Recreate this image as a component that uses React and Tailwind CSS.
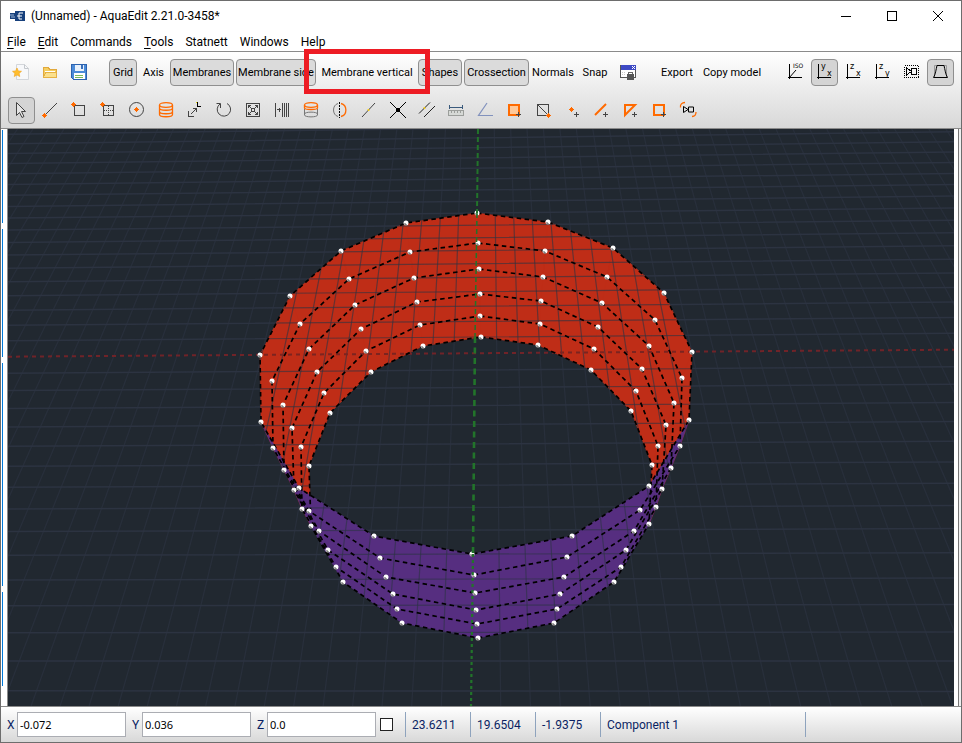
import React, { useState } from "react";

const ORANGE = "#ff6a00";
const DARK = "#444444";

const menus = [
  { label: "File", mnemonic: true },
  { label: "Edit", mnemonic: true },
  { label: "Commands" },
  { label: "Tools", mnemonic: true },
  { label: "Statnett" },
  { label: "Windows" },
  { label: "Help" },
];

// each station runs from the upper rim to the lower rim of the net
const stations = [
  [[477, 213], [478, 243], [479, 269], [480, 294], [480, 316], [481, 337]],
  [[548, 222], [545, 251], [543, 277], [541, 301], [540, 324], [538, 345]],
  [[613, 248], [607, 277], [602, 303], [598, 327], [594, 349], [591, 370]],
  [[664, 293], [655, 320], [649, 346], [642, 369], [636, 391], [631, 411]],
  [[692, 352], [682, 378], [674, 403], [666, 425], [658, 446], [652, 465]],
  [[689, 420], [680, 446], [671, 468], [662, 489], [656, 507], [649, 524]],
  [[649, 486], [640, 510], [634, 531], [626, 550], [621, 567], [614, 582]],
  [[572, 536], [567, 557], [564, 577], [560, 594], [557, 609], [554, 623]],
  [[472, 554], [474, 575], [475, 593], [476, 610], [477, 624], [478, 638]],
  [[374, 536], [380, 558], [386, 577], [393, 594], [397, 609], [402, 623]],
  [[299, 488], [309, 511], [319, 531], [328, 550], [336, 567], [343, 582]],
  [[261, 422], [273, 448], [284, 470], [294, 490], [302, 509], [311, 526]],
  [[260, 355], [272, 381], [283, 405], [292, 428], [301, 447], [309, 466]],
  [[290, 296], [300, 324], [309, 349], [317, 372], [324, 393], [330, 413]],
  [[341, 251], [349, 279], [355, 305], [361, 329], [366, 351], [371, 372]],
  [[406, 223], [410, 252], [414, 278], [417, 302], [420, 325], [423, 346]],
];

const panelPath = (i) => {
  const a = stations[i];
  const b = stations[(i + 1) % stations.length];
  return "M" + [...a, ...[...b].reverse()].map((p) => p.join(" ")).join("L") + "Z";
};

const backPanels = [11, 12, 13, 14, 15, 0, 1, 2, 3, 4].map(panelPath).join("");
const frontPanels = [5, 6, 7, 8, 9, 10].map(panelPath).join("");

const rings = [0, 1, 2, 3, 4, 5].map((r) =>
  stations.map((s) => s[r].join(",")).join(" ")
);

const DEPTH = 0.0178;
let rowPath = "";
for (let k = -19; k <= 15; k++) {
  if (k === 0) continue;
  const f = 1 / (1 - DEPTH * k) - 1;
  rowPath += `M8 ${(356.7 + 917 * f).toFixed(1)}L954 ${(349.7 + 938 * f).toFixed(1)}`;
}

let columnPath = "";
for (let j = -34; j <= 34; j++) {
  if (j === 0) continue;
  const top = 478 + 16.3 * j + 0.0145 * j * j;
  const bottom = 471 + 29.7 * j + 0.025 * j * j;
  columnPath += `M${top.toFixed(1)} 129L${bottom.toFixed(1)} 706`;
}

function Viewport() {
  return (
    <svg
      viewBox="8 129 946 577"
      preserveAspectRatio="xMidYMid slice"
      className="block min-h-0 min-w-0 flex-1 bg-[#212830]"
      role="img"
      aria-label="Net model"
    >
      <defs>
        <clipPath id="net">
          <path d={backPanels} />
          <path d={frontPanels} />
        </clipPath>
      </defs>
      <path d={columnPath} stroke="#282f3b" strokeWidth="1.3" fill="none" />
      <path d={rowPath} stroke="#2c3341" strokeWidth="1.5" fill="none" />
      <path d="M8 356.7L954 349.7" stroke="#702328" strokeWidth="2" strokeDasharray="4 4" />
      <path d={backPanels} fill="#bf2d17" stroke="#bf2d17" strokeWidth="0.5" />
      <path d={frontPanels} fill="#562e80" stroke="#562e80" strokeWidth="0.5" />
      <g clipPath="url(#net)" fill="none">
        <path d={columnPath} stroke="#2b3442" strokeOpacity="0.6" strokeWidth="1.2" />
        <path d={rowPath} stroke="#2b3442" strokeOpacity="0.6" strokeWidth="1.2" />
        <path d="M8 356.7L954 349.7" stroke="#7c2420" strokeWidth="2" strokeDasharray="4 4" />
      </g>
      {rings.map((points, i) => (
        <polygon
          key={i}
          points={points}
          fill="none"
          stroke="#000"
          strokeWidth="1.7"
          strokeDasharray="4.5 3.5"
        />
      ))}
      {stations.flat().map(([x, y]) => (
        <g key={`${x}-${y}`}>
          <circle cx={x} cy={y} r="2.5" fill="#fff" />
          <path d={`M${x - 2} ${y + 1}h2v2`} stroke="#555" strokeWidth="1" fill="none" />
        </g>
      ))}
      <g fill="none" stroke="#22742a">
        <path d="M478 129L477 213" strokeWidth="2" strokeDasharray="5 3" />
        <path d="M477 213L475 337" strokeWidth="1.5" strokeDasharray="5 3" />
        <path d="M475 337L473 554" strokeWidth="2.6" strokeDasharray="6 4.5" />
        <path d="M473 554L471 706" strokeWidth="2.2" strokeDasharray="3 3" />
      </g>
    </svg>
  );
}

function Icon({ children, crisp = true }) {
  return (
    <svg
      viewBox="0 0 25 25"
      className="h-[25px] w-[25px]"
      fill="none"
      stroke={DARK}
      shapeRendering={crisp ? "crispEdges" : "auto"}
      aria-hidden="true"
    >
      {children}
    </svg>
  );
}

function Plus({ x, y, color = DARK }) {
  return (
    <path
      d={`M${x - 2} ${y + 0.5}h5M${x + 0.5} ${y - 2}v5`}
      stroke={color}
      shapeRendering="crispEdges"
    />
  );
}

// orange marker for the point that the tool places
function Spot({ x, y }) {
  return (
    <path
      d={`M${x - 2} ${y}h5v1h-5zM${x} ${y - 2}h1v5h-1zM${x - 1} ${y - 1}h3v3h-3z`}
      fill={ORANGE}
      stroke="none"
      shapeRendering="crispEdges"
    />
  );
}

function AxisLetters({ up, right }) {
  return (
    <>
      <path d="M6.500 4v15M5 17.500h14" stroke="#000" />
      <text x="9" y="9" fontSize="8" fill="#000" stroke="none" className="font-['DejaVu_Sans']">
        {up}
      </text>
      <text x="15" y="16" fontSize="8" fill="#000" stroke="none" className="font-['DejaVu_Sans']">
        {right}
      </text>
    </>
  );
}

const fileTools = [
  {
    name: "New",
    icon: (
      <Icon crisp={false}>
        <path d="M7.500 4.500h8l4 4v11h-12z" fill="#f7f8fa" stroke="#d3d6da" />
        <path d="M15.500 4.500v4h4" stroke="#c4c8cc" />
        <path d="M8 8l1.300 2.900 3.200.4-2.400 2.100.7 3.100L8 15l-2.800 1.500.7-3.100-2.400-2.100 3.200-.4z" fill="#ffbe2e" stroke="#f0a11a" strokeWidth="0.6" />
      </Icon>
    ),
  },
  {
    name: "Open",
    icon: (
      <Icon>
        <path d="M5.500 17.500v-10h5l1 2h7v8z" fill="#f5cf62" stroke="#e2a93c" />
        <path d="M7 11h10v2H7z" fill="#fff" stroke="none" />
        <path d="M5.500 17.500l2-5h11v5z" fill="#fbe08c" stroke="#e6b143" />
      </Icon>
    ),
  },
  {
    name: "Save",
    icon: (
      <Icon>
        <path d="M4.500 4.500h15v15h-13l-2-2z" fill="#4b8bd8" stroke="#2c62ae" />
        <path d="M8 5h9v6H8z" fill="#e8f1fb" stroke="none" />
        <path d="M14 5h2v4h-2z" fill="#3a6fb9" stroke="none" />
        <path d="M7 13h11v6H7z" fill="#fff" stroke="none" />
        <path d="M8 15.500h8M8 17.500h8" stroke="#79b95b" />
      </Icon>
    ),
  },
];

const displayToggles = [
  { label: "Grid", width: "w-7", on: true },
  { label: "Axis", width: "w-[29px]" },
  { label: "Membranes", width: "w-16", on: true },
  { label: "Membrane side", width: "w-20", on: true },
  { label: "Membrane vertical", width: "w-[98px]", marked: true },
  { label: "Shapes", width: "w-11", on: true },
  { label: "Crossection", width: "w-[65px]", on: true },
  { label: "Normals", width: "w-11" },
  { label: "Snap", width: "w-9" },
];

const viewTools = [
  {
    name: "Isometric view",
    icon: (
      <Icon>
        <path d="M6.500 4v15M5 17.500h14" stroke="#000" />
        <path d="M6 18l7-8" stroke="#000" shapeRendering="auto" />
        <text x="10" y="8" fontSize="6" fill="#000" stroke="none" className="font-['DejaVu_Sans']">
          ISO
        </text>
      </Icon>
    ),
  },
  { name: "XY view", on: true, icon: <Icon><AxisLetters up="y" right="x" /></Icon> },
  { name: "XZ view", icon: <Icon><AxisLetters up="z" right="x" /></Icon> },
  { name: "YZ view", icon: <Icon><AxisLetters up="z" right="y" /></Icon> },
  {
    name: "Camera view",
    icon: (
      <Icon>
        <path d="M5.500 5.500h14v12h-14z" stroke="#000" strokeDasharray="1 1" />
        <path d="M7.500 8v7l5-3.500zM12.500 8.500h5v6h-5z" stroke="#000" />
      </Icon>
    ),
  },
  {
    name: "Perspective",
    on: true,
    icon: (
      <Icon crisp={false}>
        <path d="M6.500 5.500h12v12h-12z" stroke="#999" />
        <path d="M5.500 17.500c2-3 2.500-8 3.500-12h7c1 4 1.500 9 3.500 12z" stroke="#000" />
      </Icon>
    ),
  },
];

const editTools = [
  {
    name: "Select",
    on: true,
    icon: (
      <Icon crisp={false}>
        <path d="M7.500 4.500v13l3-3 2.500 5 2-1-2.500-5h4z" fill="#e4e4e4" />
      </Icon>
    ),
  },
  {
    name: "Line",
    icon: (
      <Icon crisp={false}>
        <path d="M7 17L19 5" />
        <Spot x={6} y={17} />
      </Icon>
    ),
  },
  {
    name: "Rectangle",
    icon: (
      <Icon>
        <path d="M7.500 7.500h10v10h-10z" />
        <Spot x={6} y={6} />
      </Icon>
    ),
  },
  {
    name: "Rectangle grid",
    icon: (
      <Icon>
        <path d="M7.500 7.500h10v10h-10z" />
        <path d="M12.500 8v10M8 12.500h10" strokeDasharray="1 1" />
        <Spot x={6} y={6} />
      </Icon>
    ),
  },
  {
    name: "Circle",
    icon: (
      <Icon crisp={false}>
        <circle cx="11.500" cy="11.500" r="7" />
        <Spot x={11} y={11} />
      </Icon>
    ),
  },
  {
    name: "Cylinder net",
    icon: (
      <Icon crisp={false}>
        <g stroke={ORANGE} strokeWidth="1.300">
          <ellipse cx="12" cy="7" rx="6.500" ry="2.300" />
          <path d="M5.500 7v9.500c0 3 13 3 13 0V7M5.500 10c0 3 13 3 13 0M5.500 13.500c0 3 13 3 13 0" />
        </g>
      </Icon>
    ),
  },
  {
    name: "Scale",
    icon: (
      <Icon>
        <path d="M5.500 13v5.500h5" />
        <path d="M8 16l5-5M10 10.500h3.500V14" />
        <path d="M14.500 4v4.500H18" stroke="#000" />
        <path d="M13 4.500h1" stroke="#e8d600" />
      </Icon>
    ),
  },
  {
    name: "Rotate",
    icon: (
      <Icon crisp={false}>
        <path d="M8 6a6.700 6.700 0 1 0 7-.500" />
        <path d="M4.500 5.500h4v4.500" />
      </Icon>
    ),
  },
  {
    name: "Fit",
    icon: (
      <Icon>
        <path d="M5.500 5.500h13v13h-13z" />
        <path d="M10 10l-3-3M14 10l3-3M10 14l-3 3M14 14l3 3M7.500 10V7.500H10M14 7.500h2.500V10M7.500 14v2.500H10M14 16.500h2.500V14M10.500 10.500h3v3h-3z" />
      </Icon>
    ),
  },
  {
    name: "Repeat",
    icon: (
      <Icon>
        <path d="M5.500 5v14M12.500 5v14M14.500 5v14M16.500 5v14M18.500 5v14M7 11.500h4M9.500 9.500v4" />
      </Icon>
    ),
  },
  {
    name: "Cylinder",
    icon: (
      <Icon crisp={false}>
        <path d="M5.500 11v6c0 2.500 13 2.500 13 0v-6M5.500 16c0-2.500 13-2.500 13 0" stroke="#777" />
        <ellipse cx="12" cy="7" rx="6.500" ry="2.300" stroke={ORANGE} strokeWidth="1.300" />
        <path d="M5.500 7v3c0 2 13 2 13 0V7" stroke={ORANGE} strokeWidth="1.300" />
      </Icon>
    ),
  },
  {
    name: "Mirror",
    icon: (
      <Icon crisp={false}>
        <path d="M10 5.500c-6 1.500-6 11.500 0 13" stroke="#777" />
        <path d="M13 5.500c6.500 1.500 6.500 11.500 0 13" stroke={ORANGE} strokeWidth="1.300" />
        <path d="M11.500 4v16" stroke="#000" strokeDasharray="2 1" />
      </Icon>
    ),
  },
  {
    name: "Split line",
    icon: (
      <Icon crisp={false}>
        <path d="M5 19L18 5" />
        <path d="M11 12.500l1-1" stroke="#ffd000" strokeWidth="2" />
      </Icon>
    ),
  },
  {
    name: "Intersect",
    icon: (
      <Icon crisp={false}>
        <path d="M4 4l16 16M20 4L4 20" stroke="#000" />
        <path d="M10 10h4v4h-4z" fill="#000" stroke="none" />
      </Icon>
    ),
  },
  {
    name: "Parallel",
    icon: (
      <Icon crisp={false}>
        <path d="M4 15.500L15 4.500M9 19L20 8" stroke="#222" />
        <path d="M9 10.500l1-1" stroke="#ffd000" strokeWidth="2" />
      </Icon>
    ),
  },
  {
    name: "Measure",
    icon: (
      <Icon>
        <path d="M5.500 7v4M18.500 7v4M6 9h13" stroke="#3a5a7c" />
        <path d="M4.500 12.500h15v5h-15z" fill="#d6d9d6" stroke="#9b9e9b" />
        <path d="M7.500 13v2M10.500 13v2M13.500 13v2M16.500 13v2" stroke="#9b9e9b" />
      </Icon>
    ),
  },
  {
    name: "Angle",
    icon: (
      <Icon crisp={false}>
        <path d="M14 5L5.500 17.500H20" stroke="#8292bd" strokeWidth="1.200" />
      </Icon>
    ),
  },
  {
    name: "Add face",
    icon: (
      <Icon>
        <path d="M7 7h10v10H7z" fill="#ffc898" stroke={ORANGE} strokeWidth="2" />
        <Plus x={16} y={16} />
      </Icon>
    ),
  },
  {
    name: "Split face",
    icon: (
      <Icon>
        <path d="M6.500 6.500h11v11h-11zM7 7l10 10" />
        <Spot x={17} y={17} />
      </Icon>
    ),
  },
  {
    name: "Add point",
    icon: (
      <Icon>
        <Spot x={11} y={11} />
        <Plus x={16} y={16} />
      </Icon>
    ),
  },
  {
    name: "Add beam",
    icon: (
      <Icon crisp={false}>
        <path d="M6 17L17 6" stroke={ORANGE} strokeWidth="2" />
        <Plus x={16} y={16} />
      </Icon>
    ),
  },
  {
    name: "Add triangle",
    icon: (
      <Icon crisp={false}>
        <path d="M7 7h10L7 17z" stroke={ORANGE} strokeWidth="2" />
        <Plus x={16} y={16} />
      </Icon>
    ),
  },
  {
    name: "Add square",
    icon: (
      <Icon>
        <path d="M7 7h10v10H7z" stroke={ORANGE} strokeWidth="2" />
        <Plus x={16} y={16} />
      </Icon>
    ),
  },
  {
    name: "Orbit camera",
    icon: (
      <Icon crisp={false}>
        <path d="M7.500 8.500v6l4.500-3zM12.500 9h5v5h-5z" stroke="#000" />
        <path d="M9 4.500c-3 0-5 2-4.500 5M20 14c0 3-1 4.500-4 4.500" stroke={ORANGE} strokeWidth="1.300" />
      </Icon>
    ),
  },
];

function ToolButton({ name, icon, on }) {
  return (
    <button
      aria-label={name}
      aria-pressed={!!on}
      className={`h-[27px] w-[27px] shrink-0 rounded border ${
        on ? "border-[#8f8f8f] bg-[#d4d4d4]" : "border-transparent"
      }`}
    >
      {icon}
    </button>
  );
}

function TextTool({ label, width, on, marked, onClick }) {
  return (
    <button
      onClick={onClick}
      aria-pressed={on}
      className={`relative flex h-[27px] shrink-0 items-center justify-center rounded border ${width} ${
        on ? "border-[#8f8f8f] bg-[#dbdbdb]" : "border-transparent"
      }`}
    >
      {label}
      {marked && (
        <span className="pointer-events-none absolute -top-[11px] -right-[15px] -bottom-[9px] -left-[15px] z-10 border-5 border-[#ed1c24]" />
      )}
    </button>
  );
}

function Toolbar() {
  const [toggles, setToggles] = useState(displayToggles.map((t) => !!t.on));

  const flip = (index) => {
    setToggles((prev) => prev.map((v, i) => (i === index ? !v : v)));
  };

  return (
    <div className="flex flex-col gap-[11px] border-y border-[#8a8a8a] bg-linear-to-b from-white to-[#d8d8d8] px-[7px] pt-[7px] pb-1 font-[Roboto,sans-serif] text-[11px] leading-4 whitespace-nowrap text-black">
      <div className="flex">
        <div className="mr-4 flex gap-0.5">
          {fileTools.map((tool) => (
            <ToolButton key={tool.name} {...tool} />
          ))}
        </div>
        <div className="flex gap-0.5">
          {displayToggles.map((tool, i) => (
            <TextTool key={tool.label} {...tool} on={toggles[i]} onClick={() => flip(i)} />
          ))}
          <ToolButton
            name="Lock window"
            icon={
              <Icon>
                <path d="M4.500 5.500h15v12h-15z" fill="#fff" stroke="#555" />
                <path d="M5 5h15v5H5z" fill="#3d49c4" stroke="none" />
                <path d="M16 6l3 3M19 6l-3 3" stroke="#fff" />
                <path d="M6 12.500h4M6 14.500h3" stroke="#ccc" strokeDasharray="1 1" />
                <path d="M12.500 14v-2h4v2" stroke="#666" />
                <path d="M11 14h7v6h-7z" fill="#555" stroke="none" />
              </Icon>
            }
          />
        </div>
        <div className="ml-4 flex gap-0.5">
          <TextTool label="Export" width="w-[38px]" on={false} />
          <TextTool label="Copy model" width="w-[68px]" on={false} />
        </div>
        <div className="ml-auto flex gap-0.5">
          {viewTools.map((tool) => (
            <ToolButton key={tool.name} {...tool} />
          ))}
        </div>
      </div>
      <div className="flex gap-0.5">
        {editTools.map((tool) => (
          <ToolButton key={tool.name} {...tool} />
        ))}
      </div>
    </div>
  );
}

function TitleBar() {
  return (
    <header className="flex h-[30px] items-center bg-white pl-2 text-xs text-black">
      <svg viewBox="0 0 16 12" className="mr-1.5 h-3 w-4" aria-hidden="true">
        <path d="M1 3h5V1h10v10H6V9H1z" fill="#17407c" />
        <path d="M1 5h4M2 7h4" stroke="#9fb8d8" />
        <path d="M14 3h-4v6h3M8 6h5" stroke="#fff" fill="none" />
      </svg>
      <h1 className="font-[Roboto,sans-serif]">(Unnamed) - AquaEdit 2.21.0-3458*</h1>
      <div className="ml-auto flex">
        <button aria-label="Minimize" className="flex h-[30px] w-[46px] items-center justify-center">
          <svg viewBox="0 0 10 10" className="h-2.5 w-2.5" stroke="#000" shapeRendering="crispEdges">
            <path d="M0 5.500h10" />
          </svg>
        </button>
        <button aria-label="Maximize" className="flex h-[30px] w-[46px] items-center justify-center">
          <svg viewBox="0 0 10 10" className="h-2.5 w-2.5" stroke="#000" fill="none" shapeRendering="crispEdges">
            <path d="M.5 .5h9v9h-9z" />
          </svg>
        </button>
        <button aria-label="Close" className="flex h-[30px] w-[46px] items-center justify-center">
          <svg viewBox="0 0 10 10" className="h-2.5 w-2.5" stroke="#000">
            <path d="M0 0l10 10M10 0L0 10" />
          </svg>
        </button>
      </div>
    </header>
  );
}

function MenuBar() {
  return (
    <nav className="flex h-5 items-center gap-3 bg-white pt-0.5 pl-1.5 font-[Roboto,sans-serif] text-xs text-black">
      {menus.map(({ label, mnemonic }) => (
        <button key={label}>
          {mnemonic ? (
            <>
              <span className="underline underline-offset-2">{label[0]}</span>
              {label.slice(1)}
            </>
          ) : (
            label
          )}
        </button>
      ))}
    </nav>
  );
}

function StatusBar() {
  const [position, setPosition] = useState({ X: "-0.072", Y: "0.036", Z: "0.0" });
  const [relative, setRelative] = useState(false);

  return (
    <footer className="flex h-9 items-center border-t border-[#8a8a8a] bg-linear-to-b from-white to-[#d8d8d8] pl-1.5 font-[Roboto,sans-serif] text-xs text-[#0a1f63]">
      {Object.keys(position).map((axis) => (
        <div key={axis} className="mr-1.5 flex items-center">
          <label htmlFor={`pos-${axis}`} className="w-2.5">
            {axis}
          </label>
          <input
            id={`pos-${axis}`}
            type="text"
            value={position[axis]}
            onChange={(e) => setPosition({ ...position, [axis]: e.target.value })}
            className="h-[25px] w-[109px] border border-[#abadb3] bg-white px-0.5 font-['Noto_Sans',sans-serif] text-[11px] text-black outline-none"
          />
        </div>
      ))}
      <input
        type="checkbox"
        aria-label="Relative"
        checked={relative}
        onChange={(e) => setRelative(e.target.checked)}
        className="-ml-0.5 h-[13px] w-[13px] appearance-none border border-[#222] bg-white checked:bg-[#222]"
      />
      <div className="ml-3 flex">
        {["23.6211", "19.6504", "-1.9375"].map((value) => (
          <span key={value} className="flex h-[25px] w-[65px] items-center border-l border-[#8ea3bd] pl-1.5">
            {value}
          </span>
        ))}
        <span className="flex h-[25px] w-[206px] items-center border-x border-[#8ea3bd] pl-1.5">
          Component 1
        </span>
      </div>
    </footer>
  );
}

export default function App() {
  return (
    <div className="flex h-screen flex-col overflow-hidden border border-[#6d6d6d] bg-white">
      <TitleBar />
      <MenuBar />
      <Toolbar />
      <main className="flex min-h-0 flex-1">
        <div className="flex w-[7px] shrink-0 flex-col gap-1.5 border-r border-[#8a8a8a] bg-white pt-px pb-5 pl-px">
          <div className="w-px grow-[93] bg-[#0078d7]" />
          <div className="w-px grow-[128] bg-[#0078d7]" />
          <div className="w-px grow-[222] bg-[#0078d7]" />
          <div className="w-px grow-[94] bg-[#0078d7]" />
        </div>
        <Viewport />
        <div className="w-[7px] shrink-0 border-l-4 border-white bg-[#f0f0f0]">
          <div className="h-full w-px bg-[#777]" />
        </div>
      </main>
      <StatusBar />
    </div>
  );
}
